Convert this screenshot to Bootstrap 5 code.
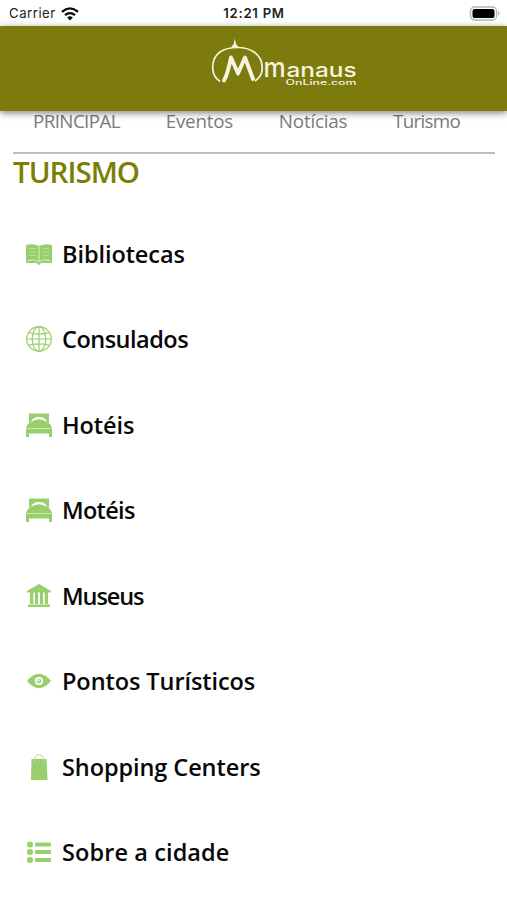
<!DOCTYPE html>
<html lang="pt-BR">
<head>
<meta charset="utf-8">
<meta name="viewport" content="width=device-width, initial-scale=1">
<title>Manaus Online – Turismo</title>
<link href="https://cdn.jsdelivr.net/npm/bootstrap@5.3.0/dist/css/bootstrap.min.css" rel="stylesheet">
<style>
  body { font-family: "Open Sans", "Noto Sans", sans-serif; height: 900px; overflow: hidden; background: #fff; }
  .status-bar { height: 26px; padding: 2px 7px 0 9px; font-family: Inter, sans-serif; font-size: 13.2px; color: #222; }
  .status-side { flex: 1 1 0; }
  .carrier { letter-spacing: .5px; }
  .wifi { margin-left: -3px; }
  .clock { letter-spacing: .7px; font-size: 13.2px; padding-right: 1px; }
  .brand-bar { height: 85px; background: #7d7a0e; box-shadow: 0 2px 7px rgba(0,0,0,.5); z-index: 2; padding: 11px 0 0 60px; }
  .section-nav { height: 43px; margin: 0 12px 0 13px; border-bottom: 2px solid #bcbcbc; padding: 0 35px 0 20px; }
  .section-nav .nav-link { color: #7b7b7b; font-size: 18.8px; line-height: 20px; letter-spacing: -.2px; white-space: nowrap; }
  .section-nav .nav-link:first-child { letter-spacing: -.6px; }
  .section-nav .nav-link:last-child { letter-spacing: -.7px; }
  .page-title { color: #7b7f06; font-size: 29.5px; line-height: 34px; margin: 1px 0 0 13px; font-weight: 600; letter-spacing: -1px; height: 56px; }
  .topic { height: 85.5px; padding: 0 26px; border: 0; gap: 10px; color: #080808; font-size: 23.5px; font-weight: 600; line-height: 30px; letter-spacing: -.08px; }
  .topic svg { width: 26px; height: 28px; flex: none; color: #98cf6c; }
  .fit-snug { letter-spacing: -.5px; }
  .fit-close { letter-spacing: -.7px; }
  .fit-tight { letter-spacing: -1.1px; }
  .fit-wide { letter-spacing: .1px; }
</style>
</head>
<body>
<header class="status-bar d-flex align-items-center">
  <div class="status-side d-flex align-items-center gap-2">
    <span class="carrier">Carrier</span>
    <svg class="wifi" width="18" height="14" viewBox="0 0 18 14" fill="none" stroke="#080808" stroke-width="2.3"><path d="M1 4.800Q9-2 17 4.800M4 8.200Q9 4 14 8.200"/><path d="M6.200 10.500Q9 8.200 11.800 10.500L9 13.400Z" fill="#080808" stroke="none"/></svg>
  </div>
  <span class="clock fw-semibold">12:21 PM</span>
  <div class="status-side d-flex justify-content-end">
    <svg width="31" height="16" viewBox="0 0 31 16"><rect x="1.500" y="1" width="26" height="13" rx="4" fill="#fff" stroke="#b5b5b5" stroke-width="1.300"/><rect x="3.500" y="2.900" width="22" height="9.200" rx="2.200" fill="#000"/><path d="M29 5q3 2.500 0 5z" fill="#aaa"/></svg>
  </div>
</header>

<div class="brand-bar position-relative d-flex justify-content-center align-items-start">
  <svg width="150" height="52" viewBox="208 36 150 52" role="img" aria-label="Manaus Online.com">
    <g fill="none" stroke="#f5f4df">
      <path d="M219 80.500C209 74 209.500 58 219 51C228 45 245 45 253 51C263 58 264.500 73 254 80" stroke-width="1.700"/>
      <path d="M223 79.500C226 75 228 66 230 56.500L237 72.500L244 56.500L252 78" stroke-width="3.900" stroke-linejoin="round" stroke-linecap="round"/>
    </g>
    <path d="M233.800 37.500L235 43L238 46.500H230L232.700 43Z" fill="#f5f4df"/>
    <g fill="#f5f4df" font-family="Inter, sans-serif">
      <text transform="translate(262.500 75.500) scale(.96 1)" font-size="26" font-weight="500">m</text>
      <text x="285.500" y="75.500" font-size="19" font-weight="500" textLength="70" lengthAdjust="spacingAndGlyphs">anaus</text>
      <text x="284.500" y="83.700" font-size="7" font-weight="500" textLength="71" lengthAdjust="spacingAndGlyphs">OnLine.com</text>
    </g>
  </svg>
</div>

<nav class="section-nav nav flex-nowrap justify-content-between align-items-start">
  <a class="nav-link p-0" href="#">PRINCIPAL</a>
  <a class="nav-link p-0" href="#">Eventos</a>
  <a class="nav-link p-0" href="#">Notícias</a>
  <a class="nav-link p-0" href="#">Turismo</a>
</nav>

<main>
  <h1 class="page-title">TURISMO</h1>
  <div class="list-group list-group-flush">
    <a class="topic list-group-item d-flex align-items-center" href="#">
      <svg viewBox="0 0 26 28" fill="currentColor"><path d="M0 5Q7 3 13 6Q19 3 26 5V23H15Q14 25 13 25T11 23H0Z"/><path d="M3 8.500H10M3 12H10M3 15.500H10M16 8.500H23M16 12H23M16 15.500H23" fill="none" stroke="#b4de94" stroke-width="1"/><path d="M13 5.500V21M1.500 20.500Q8 18.500 13 21.500Q18 18.500 24.500 20.500" fill="none" stroke="#d5efc2"/></svg>
      <span>Bibliotecas</span></a>
    <a class="topic list-group-item d-flex align-items-center" href="#">
      <svg viewBox="0 0 26 28" fill="none" stroke="currentColor" stroke-width="1.200"><circle cx="13" cy="14" r="12.300"/><ellipse cx="13" cy="14" rx="6.800" ry="12.300"/><path d="M13 1.700V26.300M.7 14H25.300M3 7.700Q13 10.500 23 7.700M3 20.300Q13 17.500 23 20.300"/></svg>
      <span class="fit-snug">Consulados</span></a>
    <a class="topic list-group-item d-flex align-items-center" href="#">
      <svg viewBox="0 0 26 28" fill="currentColor"><path d="M3 2.500H23V11.500H21Q20 6 13 6T5 11.500H3Z"/><path d="M5 11Q13 5.500 21 11Q25 13 26 17H0Q1 13 5 11Z"/><path d="M0 17.500H26V26H23V22.500H3V26H0Z"/></svg>
      <span>Hotéis</span></a>
    <a class="topic list-group-item d-flex align-items-center" href="#">
      <svg viewBox="0 0 26 28" fill="currentColor"><path d="M3 2.500H23V11.500H21Q20 6 13 6T5 11.500H3Z"/><path d="M5 11Q13 5.500 21 11Q25 13 26 17H0Q1 13 5 11Z"/><path d="M0 17.500H26V26H23V22.500H3V26H0Z"/></svg>
      <span class="fit-close">Motéis</span></a>
    <a class="topic list-group-item d-flex align-items-center" href="#">
      <svg viewBox="0 0 26 28" fill="currentColor"><path d="M13 2L25 9V10.500H1V9Z"/><path d="M4 10H7.300V22H4ZM9 10H12V22H9ZM14 10H17V22H14ZM18.700 10H22V22H18.700ZM2 22.500H24V25H2Z"/></svg>
      <span class="fit-tight">Museus</span></a>
    <a class="topic list-group-item d-flex align-items-center" href="#">
      <svg viewBox="0 0 26 28"><path d="M1 14Q13-.5 25 14Q13 28.500 1 14Z" fill="currentColor"/><circle cx="13" cy="14" r="3.200" fill="currentColor" stroke="#fff" stroke-width="1.700"/><circle cx="12.500" cy="13.500" r="1.200" fill="#e9f6df"/></svg>
      <span>Pontos Turísticos</span></a>
    <a class="topic list-group-item d-flex align-items-center" href="#">
      <svg viewBox="0 0 26 28"><path d="M5.500 6H20.500L21.500 27H5Z" fill="currentColor"/><path d="M8.500 9V6Q10 1.500 13 1.500T17.500 6V9" fill="none" stroke="#b9dfa0" stroke-width="1.100"/></svg>
      <span>Shopping Centers</span></a>
    <a class="topic list-group-item d-flex align-items-center" href="#">
      <svg viewBox="0 0 26 28" fill="currentColor"><circle cx="4" cy="6.500" r="3"/><circle cx="4" cy="14" r="3"/><circle cx="4" cy="22" r="3"/><rect x="9" y="4.500" width="16" height="4" rx="1"/><rect x="9" y="12" width="16" height="4" rx="1"/><rect x="9" y="20" width="16" height="4" rx="1"/></svg>
      <span class="fit-wide">Sobre a cidade</span></a>
  </div>
</main>
<script src="https://cdn.jsdelivr.net/npm/bootstrap@5.3.0/dist/js/bootstrap.bundle.min.js"></script>
</body>
</html>
